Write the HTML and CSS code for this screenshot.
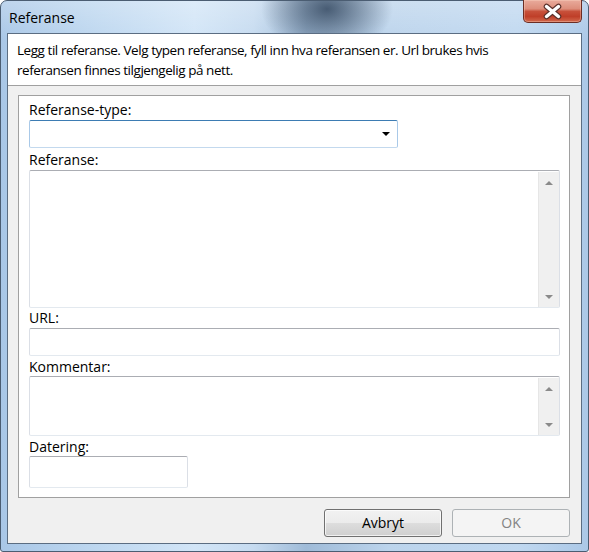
FILE: index.html
```html
<!DOCTYPE html>
<html>
<head>
<meta charset="utf-8">
<title>Referanse</title>
<link rel="stylesheet" href="styles.css">
</head>
<body>
<div class="window">
  <div class="titlebar">
    <span class="title">Referanse</span>
    <div class="close">
      <svg width="59" height="23" viewBox="0 0 59 23">
        <path d="M23.5 6.5 L35.5 16.5 M35.5 6.5 L23.5 16.5" stroke="#5a302a" stroke-width="5.6" stroke-linecap="round" fill="none"/>
        <path d="M23.5 6.5 L35.5 16.5 M35.5 6.5 L23.5 16.5" stroke="#ffffff" stroke-width="3.4" stroke-linecap="round" fill="none"/>
      </svg>
    </div>
  </div>
  <div class="client">
    <div class="intro">Legg til referanse. Velg typen referanse, fyll inn hva referansen er. Url brukes hvis<br>referansen finnes tilgjengelig på nett.</div>
    <div class="main">
      <div class="group">
        <label class="lbl">Referanse-type:</label>
        <div class="combo"><span class="combo-arrow"></span></div>
        <label class="lbl gap2">Referanse:</label>
        <div class="textbox area-ref"><div class="fill"></div><div class="scroll"><span class="sb-btn"><span class="up"></span></span><span class="sb-btn"><span class="down"></span></span></div></div>
        <label class="lbl">URL:</label>
        <div class="textbox single"></div>
        <label class="lbl gap1 short">Kommentar:</label>
        <div class="textbox area-com"><div class="fill"></div><div class="scroll"><span class="sb-btn"><span class="up"></span></span><span class="sb-btn"><span class="down"></span></span></div></div>
        <label class="lbl gap1 short">Datering:</label>
        <div class="textbox date"></div>
      </div>
      <div class="buttons">
        <div class="btn">Avbryt</div>
        <div class="btn disabled">OK</div>
      </div>
    </div>
  </div>
</div>
</body>
</html>
```
FILE: styles.css
```css
html, body {
  margin: 0;
  padding: 0;
}
body {
  width: 589px;
  height: 552px;
  overflow: hidden;
  background: #ffffff;
  font-family: "Segoe UI", "Open Sans", "DejaVu Sans", sans-serif;
  font-size: 14px;
  color: #000;
}
.window {
  box-sizing: border-box;
  width: 589px;
  height: 552px;
  border: 1px solid #4b5d72;
  border-radius: 7px 7px 3px 3px;
  padding: 0 6px 7px;
  display: flex;
  flex-direction: column;
  background:
    radial-gradient(66px 44px at 326px 8px, rgba(52, 72, 96, 0.85), rgba(52, 72, 96, 0)),
    linear-gradient(to bottom, rgba(255, 255, 255, 0.25), rgba(255, 255, 255, 0) 40px),
    linear-gradient(to right, #a9c7e7 0%, #bcd6ef 15%, #d2e5f7 33%, #c6dbf0 43%, #9fbbd8 52%, #bcd4ec 66%, #c0d8f0 88%, #abc8e7 100%);
}
.titlebar {
  height: 32px;
  display: flex;
  justify-content: space-between;
  align-items: flex-start;
}
.title {
  padding: 7px 0 0 2px;
  line-height: 20px;
  color: #000;
}
.close {
  width: 59px;
  height: 23px;
  margin-top: -1px;
  box-sizing: border-box;
  border: 1px solid #6b2d24;
  border-top: none;
  border-radius: 0 0 5px 5px;
  background: linear-gradient(to bottom, #e9ab9c 0%, #dd8e7b 40%, #c7503a 52%, #bf3f29 75%, #d2694d 100%);
  box-shadow: inset 0 0 0 1px rgba(255, 220, 200, 0.35);
}
.close svg {
  display: block;
  margin-left: -1px;
}
.client {
  flex: 1;
  border: 1px solid #5b6d82;
  background: #f0f0f0;
  display: flex;
  flex-direction: column;
}
.intro {
  background: #ffffff;
  border-bottom: 1px solid #a0a0a0;
  padding: 6px 9px 5px;
  font-size: 13.5px;
  letter-spacing: -0.45px;
  line-height: 20px;
  white-space: nowrap;
}
.main {
  flex: 1;
  padding: 9px 11px 6px 10px;
  display: flex;
  flex-direction: column;
}
.group {
  border: 1px solid #a0a0a0;
  background: #ffffff;
  padding: 4px 9px 9px 10px;
  display: flex;
  flex-direction: column;
}
.lbl {
  display: block;
  height: 20px;
  line-height: 20px;
  white-space: nowrap;
}
.lbl.short {
  height: 19px;
}
.gap2 {
  margin-top: 2px;
}
.gap1 {
  margin-top: 1px;
}
.combo {
  box-sizing: border-box;
  width: 369px;
  height: 28px;
  border: 1px solid #a9c9e8;
  border-top-color: #3d7cb3;
  border-bottom-color: #c3d9ee;
  border-radius: 2px;
  display: flex;
  align-items: center;
  justify-content: flex-end;
  padding-right: 7px;
}
.combo-arrow {
  width: 0;
  height: 0;
  border-left: 4px solid transparent;
  border-right: 4px solid transparent;
  border-top: 4px solid #000;
}
.textbox {
  box-sizing: border-box;
  border: 1px solid #dbdfe6;
  border-top-color: #abadb3;
  border-bottom-color: #e3e9ef;
  border-radius: 2px;
  background: #fff;
  display: flex;
}
.area-ref {
  height: 138px;
}
.area-com {
  height: 60px;
}
.single {
  height: 28px;
}
.date {
  width: 159px;
  height: 32px;
}
.fill {
  flex: 1;
}
.scroll {
  width: 21px;
  margin-top: 1px;
  box-sizing: border-box;
  background: #f0f0f0;
  border-left: 1px solid #e6e6e6;
  display: flex;
  flex-direction: column;
  justify-content: space-between;
}
.sb-btn {
  height: 21px;
  display: flex;
  align-items: center;
  justify-content: center;
}
.up, .down {
  width: 0;
  height: 0;
  border-left: 4px solid transparent;
  border-right: 4px solid transparent;
}
.up {
  border-bottom: 4px solid #8a8a8a;
}
.down {
  border-top: 4px solid #8a8a8a;
}
.buttons {
  margin-top: 11px;
  display: flex;
  justify-content: flex-end;
  gap: 10px;
}
.btn {
  box-sizing: border-box;
  width: 118px;
  height: 28px;
  border: 1px solid #707070;
  border-radius: 3px;
  text-align: center;
  line-height: 26px;
  background: linear-gradient(to bottom, #f2f2f2 0%, #ebebeb 50%, #dddddd 51%, #cfcfcf 100%);
  box-shadow: inset 0 0 0 1px rgba(255, 255, 255, 0.7);
}
.btn.disabled {
  border-color: #adb2b5;
  background: #f4f4f4;
  color: #838383;
  box-shadow: none;
}
```
